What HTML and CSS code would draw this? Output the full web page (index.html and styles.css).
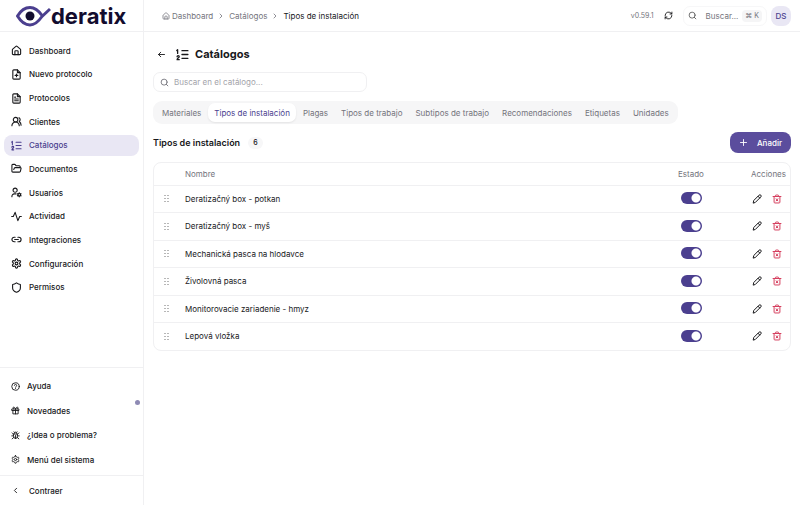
FILE: index.html
```html
<!DOCTYPE html>
<html lang="es">
<head>
<meta charset="utf-8">
<meta name="viewport" content="width=device-width, initial-scale=1">
<title>Deratix – Catálogos</title>
<link rel="stylesheet" href="styles.css">
</head>
<body>
<svg class="sprite" aria-hidden="true">
  <symbol id="home" viewBox="0 0 24 24"><path d="M3 10.500a2 2 0 0 1 .7-1.500l7-6a2 2 0 0 1 2.600 0l7 6a2 2 0 0 1 .7 1.500V19a2 2 0 0 1-2 2H5a2 2 0 0 1-2-2z"/><path d="M8.500 21v-7a1.500 1.500 0 0 1 1.500-1.500h4a1.500 1.500 0 0 1 1.500 1.500v7"/></symbol>
  <symbol id="file-plus" viewBox="0 0 24 24"><path d="M14 2H6a2 2 0 0 0-2 2v16a2 2 0 0 0 2 2h12a2 2 0 0 0 2-2V8z"/><path d="M14 2v6h6M12 11v6M9 14h6"/></symbol>
  <symbol id="file-text" viewBox="0 0 24 24"><path d="M14 2H6a2 2 0 0 0-2 2v16a2 2 0 0 0 2 2h12a2 2 0 0 0 2-2V8z"/><path d="M14 2v6h6M8 9h2M8 13h8M8 17h8"/></symbol>
  <symbol id="users" viewBox="0 0 24 24"><circle cx="10" cy="8" r="5"/><path d="M18 21a8 8 0 0 0-16 0M22 20c0-3.400-2-6.500-4-8a5 5 0 0 0-.500-8.300"/></symbol>
  <symbol id="list" viewBox="0 0 24 24"><path d="M11 5h11M11 12h11M11 19h11M3 10V3L1.500 4.500M2 16a2 2 0 1 1 4 0c0 1.500-4 3-4 5.500h4"/></symbol>
  <symbol id="folder" viewBox="0 0 24 24"><path d="m6 14 1.500-2.900A2 2 0 0 1 9.200 10H20a2 2 0 0 1 1.900 2.500l-1.500 6a2 2 0 0 1-2 1.500H4a2 2 0 0 1-2-2V5a2 2 0 0 1 2-2h3.900a2 2 0 0 1 1.700.9l.8 1.200a2 2 0 0 0 1.700.9H18a2 2 0 0 1 2 2v2"/></symbol>
  <symbol id="user-cog" viewBox="0 0 24 24"><circle cx="9" cy="7" r="4.500"/><path d="M11 15H7a5 5 0 0 0-5 5v1"/><circle cx="18" cy="17" r="3"/><path d="M18 12.500V14M18 20v1.500M22 14.700l-1.400.8M15.400 18.500l-1.400.8M22 19.300l-1.400-.8M15.400 15.500l-1.400-.8"/></symbol>
  <symbol id="activity" viewBox="0 0 24 24"><path d="M1.500 12H5l4-9 6 18 4-9h3.500"/></symbol>
  <symbol id="link" viewBox="0 0 24 24"><path d="M9 17H7A5 5 0 0 1 7 7h2M15 7h2a5 5 0 1 1 0 10h-2M8 12h8"/></symbol>
  <symbol id="gear" viewBox="0 0 24 24"><path d="M12.200 2h-.4a2 2 0 0 0-2 2v.2a2 2 0 0 1-1 1.700l-.4.300a2 2 0 0 1-2 0l-.2-.1a2 2 0 0 0-2.700.7l-.2.400a2 2 0 0 0 .7 2.700l.2.100a2 2 0 0 1 1 1.700v.5a2 2 0 0 1-1 1.800l-.2.100a2 2 0 0 0-.7 2.700l.2.400a2 2 0 0 0 2.700.7l.2-.1a2 2 0 0 1 2 0l.4.300a2 2 0 0 1 1 1.700v.2a2 2 0 0 0 2 2h.4a2 2 0 0 0 2-2v-.2a2 2 0 0 1 1-1.700l.4-.3a2 2 0 0 1 2 0l.2.100a2 2 0 0 0 2.700-.7l.2-.4a2 2 0 0 0-.7-2.700l-.2-.1a2 2 0 0 1-1-1.800v-.5a2 2 0 0 1 1-1.700l.2-.1a2 2 0 0 0 .7-2.700l-.2-.4a2 2 0 0 0-2.700-.7l-.2.100a2 2 0 0 1-2 0l-.4-.3a2 2 0 0 1-1-1.700V4a2 2 0 0 0-2-2z"/><circle cx="12" cy="12" r="3"/></symbol>
  <symbol id="shield" viewBox="0 0 24 24"><path d="M20.500 13c0 5-3.500 7.500-8.200 9.200h-.6C7 20.500 3.500 18 3.500 13V5.500c3.500 0 6-1.500 8.500-3.500 2.500 2 5 3.500 8.500 3.500z"/></symbol>
  <symbol id="help" viewBox="0 0 24 24"><circle cx="12" cy="12" r="10"/><path d="M9 9a3 3 0 0 1 6 .8c0 2-3 2.400-3 4.200M12 17.500v.1"/></symbol>
  <symbol id="gift" viewBox="0 0 24 24"><path d="M3 8h18v4H3zM5 12v9h14v-9M12 8v13M7.500 8a2.500 2.500 0 0 1 0-5C10 3 12 8 12 8s2-5 4.500-5a2.500 2.500 0 0 1 0 5"/></symbol>
  <symbol id="bug" viewBox="0 0 24 24"><path d="M8 7a4 4 0 0 1 8 0M7 8h10v7a5 5 0 0 1-10 0zM12 20v-8M8 2l2 2M16 2l-2 2M3 5l4 4M21 5l-4 4M2 13h5M17 13h5M3 21l4.500-4M21 21l-4.500-4"/></symbol>
  <symbol id="chev-left" viewBox="0 0 24 24"><path d="m15 18-6-6 6-6"/></symbol>
  <symbol id="chev-right" viewBox="0 0 24 24"><path d="m9 18 6-6-6-6"/></symbol>
  <symbol id="arrow-left" viewBox="0 0 24 24"><path d="m10 18-6-6 6-6M20 12H4"/></symbol>
  <symbol id="search" viewBox="0 0 24 24"><circle cx="11" cy="11" r="8"/><path d="m21 21-4.300-4.300"/></symbol>
  <symbol id="refresh" viewBox="0 0 24 24"><path d="M3 12a9 9 0 0 1 15.500-6.300L21 8M21 3v5h-5M21 12a9 9 0 0 1-15.500 6.300L3 16M8 16H3v5"/></symbol>
  <symbol id="plus" viewBox="0 0 24 24"><path d="M4 12h16M12 4v16"/></symbol>
  <symbol id="grip" viewBox="0 0 24 24"><path d="M8 4v.1M8 12v.1M8 20v.1M16 4v.1M16 12v.1M16 20v.1"/></symbol>
  <symbol id="pencil" viewBox="0 0 24 24"><path d="M3 21l1.300-5.500L17 2.800a2.800 2.800 0 0 1 4.200 4.200L8.500 19.700zM14.500 5.500l4 4"/></symbol>
  <symbol id="trash" viewBox="0 0 24 24"><path d="M2.500 6h19M5 6v13.500a2 2 0 0 0 2 2h10a2 2 0 0 0 2-2V6M8 6V4.500a2 2 0 0 1 2-2h4a2 2 0 0 1 2 2V6M10 11.500l4 5M14 11.500l-4 5"/></symbol>
</svg>

<div class="app">
  <aside class="sidebar">
    <a class="brand" href="#" aria-label="deratix">
      <svg class="eye" viewBox="0 0 36 24" aria-hidden="true"><path d="M35 5 27 12.500c-3.500 5-7.500 8.500-12 8.500C9.500 21 5.500 17 2.500 12 5.500 7 9.500 3.500 15 3.500c5 0 9 3.500 12.500 8.500"/><circle cx="15" cy="12" r="4.500"/></svg>
      <span class="wordmark">deratix</span>
    </a>
    <nav class="nav" aria-label="Principal">
      <a href="#"><svg class="icon"><use href="#home"/></svg>Dashboard</a>
      <a href="#"><svg class="icon"><use href="#file-plus"/></svg>Nuevo protocolo</a>
      <a href="#"><svg class="icon"><use href="#file-text"/></svg>Protocolos</a>
      <a href="#"><svg class="icon"><use href="#users"/></svg>Clientes</a>
      <a href="#" class="active" aria-current="page"><svg class="icon"><use href="#list"/></svg>Catálogos</a>
      <a href="#"><svg class="icon"><use href="#folder"/></svg>Documentos</a>
      <a href="#"><svg class="icon"><use href="#user-cog"/></svg>Usuarios</a>
      <a href="#"><svg class="icon"><use href="#activity"/></svg>Actividad</a>
      <a href="#"><svg class="icon"><use href="#link"/></svg>Integraciones</a>
      <a href="#"><svg class="icon"><use href="#gear"/></svg>Configuración</a>
      <a href="#"><svg class="icon"><use href="#shield"/></svg>Permisos</a>
    </nav>
    <div class="support">
      <a href="#"><svg class="icon"><use href="#help"/></svg>Ayuda</a>
      <a href="#" class="has-news"><svg class="icon"><use href="#gift"/></svg>Novedades</a>
      <a href="#"><svg class="icon"><use href="#bug"/></svg>¿Idea o problema?</a>
      <a href="#"><svg class="icon"><use href="#gear"/></svg>Menú del sistema</a>
    </div>
    <button class="collapse" type="button"><svg class="icon"><use href="#chev-left"/></svg>Contraer</button>
  </aside>

  <div class="page">
    <header class="topbar">
      <nav class="crumbs" aria-label="Ruta">
        <a href="#"><svg class="icon"><use href="#home"/></svg>Dashboard</a>
        <svg class="icon sep"><use href="#chev-right"/></svg>
        <a href="#">Catálogos</a>
        <svg class="icon sep"><use href="#chev-right"/></svg>
        <span aria-current="page">Tipos de instalación</span>
      </nav>
      <div class="tools">
        <span class="version">v0.59.1</span>
        <button class="refresh" type="button" aria-label="Actualizar"><svg class="icon"><use href="#refresh"/></svg></button>
        <button class="quick-search" type="button"><svg class="icon"><use href="#search"/></svg><span>Buscar...</span><kbd>⌘ K</kbd></button>
        <button class="avatar" type="button">DS</button>
      </div>
    </header>

    <main class="content">
      <div class="title">
        <button class="back" type="button" aria-label="Volver"><svg class="icon"><use href="#arrow-left"/></svg></button>
        <svg class="icon large"><use href="#list"/></svg>
        <h1>Catálogos</h1>
      </div>
      <label class="filter"><svg class="icon"><use href="#search"/></svg><input type="search" placeholder="Buscar en el catálogo..." aria-label="Buscar en el catálogo"></label>
      <div class="tabs" role="tablist">
        <button type="button" role="tab">Materiales</button>
        <button type="button" role="tab" aria-selected="true">Tipos de instalación</button>
        <button type="button" role="tab">Plagas</button>
        <button type="button" role="tab">Tipos de trabajo</button>
        <button type="button" role="tab">Subtipos de trabajo</button>
        <button type="button" role="tab">Recomendaciones</button>
        <button type="button" role="tab">Etiquetas</button>
        <button type="button" role="tab">Unidades</button>
      </div>
      <div class="section-head">
        <h2>Tipos de instalación</h2>
        <span class="count">6</span>
        <button class="add" type="button"><svg class="icon"><use href="#plus"/></svg>Añadir</button>
      </div>
      <div class="card">
        <table>
          <thead><tr><th class="grip"></th><th>Nombre</th><th class="state">Estado</th><th class="actions">Acciones</th></tr></thead>
          <tbody>
            <tr><td class="grip"><svg class="icon"><use href="#grip"/></svg></td><td>Deratizačný box - potkan</td><td class="state"><input type="checkbox" role="switch" aria-label="Estado" checked></td><td class="actions"><div><button type="button" aria-label="Editar"><svg class="icon"><use href="#pencil"/></svg></button><button class="delete" type="button" aria-label="Eliminar"><svg class="icon"><use href="#trash"/></svg></button></div></td></tr>
            <tr><td class="grip"><svg class="icon"><use href="#grip"/></svg></td><td>Deratizačný box - myš</td><td class="state"><input type="checkbox" role="switch" aria-label="Estado" checked></td><td class="actions"><div><button type="button" aria-label="Editar"><svg class="icon"><use href="#pencil"/></svg></button><button class="delete" type="button" aria-label="Eliminar"><svg class="icon"><use href="#trash"/></svg></button></div></td></tr>
            <tr><td class="grip"><svg class="icon"><use href="#grip"/></svg></td><td>Mechanická pasca na hlodavce</td><td class="state"><input type="checkbox" role="switch" aria-label="Estado" checked></td><td class="actions"><div><button type="button" aria-label="Editar"><svg class="icon"><use href="#pencil"/></svg></button><button class="delete" type="button" aria-label="Eliminar"><svg class="icon"><use href="#trash"/></svg></button></div></td></tr>
            <tr><td class="grip"><svg class="icon"><use href="#grip"/></svg></td><td>Živolovná pasca</td><td class="state"><input type="checkbox" role="switch" aria-label="Estado" checked></td><td class="actions"><div><button type="button" aria-label="Editar"><svg class="icon"><use href="#pencil"/></svg></button><button class="delete" type="button" aria-label="Eliminar"><svg class="icon"><use href="#trash"/></svg></button></div></td></tr>
            <tr><td class="grip"><svg class="icon"><use href="#grip"/></svg></td><td>Monitorovacie zariadenie - hmyz</td><td class="state"><input type="checkbox" role="switch" aria-label="Estado" checked></td><td class="actions"><div><button type="button" aria-label="Editar"><svg class="icon"><use href="#pencil"/></svg></button><button class="delete" type="button" aria-label="Eliminar"><svg class="icon"><use href="#trash"/></svg></button></div></td></tr>
            <tr><td class="grip"><svg class="icon"><use href="#grip"/></svg></td><td>Lepová vložka</td><td class="state"><input type="checkbox" role="switch" aria-label="Estado" checked></td><td class="actions"><div><button type="button" aria-label="Editar"><svg class="icon"><use href="#pencil"/></svg></button><button class="delete" type="button" aria-label="Eliminar"><svg class="icon"><use href="#trash"/></svg></button></div></td></tr>
          </tbody>
        </table>
      </div>
    </main>
  </div>
</div>
</body>
</html>
```
FILE: styles.css
```css
:root {
  --ink: #18181b;
  --muted: #74747c;
  --line: #f0f0f2;
  --brand: #4b3f8f;
  --brand-soft: #e9e7f4;
}

* { box-sizing: border-box; }

body {
  margin: 0;
  color: var(--ink);
  background: #fff;
  font: 400 8px/12px Inter, "Liberation Sans", sans-serif;
}

a { color: inherit; text-decoration: none; }
button { padding: 0; border: 0; background: none; color: inherit; font: inherit; cursor: pointer; }
h1, h2 { margin: 0; }

.sprite { position: absolute; width: 0; height: 0; }

.icon {
  flex: none;
  width: 9px;
  height: 9px;
  fill: none;
  stroke: currentColor;
  stroke-width: 2.4;
  stroke-linecap: round;
  stroke-linejoin: round;
}

.icon.large { width: 13px; height: 13px; }

.app { display: flex; min-height: 100vh; }

.sidebar {
  display: flex;
  flex: none;
  flex-direction: column;
  width: 144px;
  border-right: 1px solid var(--line);
}

.brand {
  display: flex;
  align-items: center;
  height: 32px;
  padding-left: 15px;
  border-bottom: 1px solid var(--line);
}

.eye { width: 36px; height: 24px; fill: none; stroke: var(--brand); stroke-width: 3; stroke-linejoin: round; }
.eye circle { fill: #120c2e; stroke: none; }
.wordmark { color: #120c2e; font-size: 22px; font-weight: 700; line-height: 24px; }

.nav {
  display: grid;
  height: 260px;
  margin-top: 7px;
  padding: 0 4px;
  align-items: center;
  font-weight: 500;
}

.nav a {
  display: flex;
  align-items: center;
  gap: 7px;
  height: 21px;
  padding-left: 7px;
  border-radius: 8px;
}

.nav .icon { width: 11px; height: 11px; }
.nav .active { background: var(--brand-soft); color: var(--brand); }

.support {
  display: grid;
  align-items: center;
  height: 108px;
  margin-top: auto;
  padding: 6px 4px 3px 11px;
  border-top: 1px solid var(--line);
  font-weight: 500;
}

.support a { position: relative; display: flex; align-items: center; gap: 7px; }

.has-news::after {
  content: "";
  position: absolute;
  top: -5px;
  right: -1px;
  width: 5px;
  height: 5px;
  border-radius: 50%;
  background: #8e8ab4;
}

.collapse {
  display: flex;
  align-items: center;
  gap: 9px;
  height: 30px;
  padding-left: 11px;
  border-top: 1px solid var(--line);
  font-weight: 500;
}

.page { flex: 1; min-width: 0; }

.topbar {
  display: flex;
  align-items: center;
  justify-content: space-between;
  height: 32px;
  padding: 0 9px 0 18px;
  border-bottom: 1px solid var(--line);
}

.crumbs, .crumbs a, .tools { display: flex; align-items: center; }
.crumbs { gap: 4px; color: var(--muted); }
.crumbs a { gap: 2px; }
.crumbs .icon { width: 8px; height: 8px; }
.crumbs span { color: var(--ink); }

.version { margin-right: 10px; color: var(--muted); font-size: 7px; }
.refresh { display: flex; margin-right: 10px; }

.quick-search {
  display: flex;
  align-items: center;
  height: 20px;
  margin-right: 4px;
  padding: 0 4px;
  border: 1px solid #f7f7f8;
  border-radius: 7px;
  color: var(--muted);
}

.quick-search .icon { margin-right: 9px; color: #444; stroke-width: 2; }
kbd { margin-left: 4px; padding: 0 3px; border-radius: 4px; background: #f5f5f6; font: inherit; font-size: 7px; }

.avatar {
  width: 20px;
  height: 20px;
  border-radius: 8px;
  background: var(--brand-soft);
  color: var(--brand);
  font-weight: 500;
}

.content { padding: 13px 9px 0; }

.title { display: flex; align-items: center; height: 18px; padding-left: 4px; }
.back { display: flex; margin-right: 10px; }
h1 { margin-left: 6px; font-size: 11px; font-weight: 700; line-height: 16px; }

.filter {
  display: flex;
  align-items: center;
  gap: 5px;
  width: 214px;
  max-width: 100%;
  height: 20px;
  margin-top: 9px;
  padding-left: 6px;
  border: 1px solid var(--line);
  border-radius: 7px;
  color: var(--muted);
}

.filter input { flex: 1; min-width: 0; padding: 0; border: 0; outline: 0; background: none; color: var(--ink); font: inherit; }
.filter input::placeholder { color: #a3a3aa; }

.tabs {
  display: flex;
  gap: 1px;
  width: fit-content;
  height: 23px;
  margin-top: 9px;
  padding: 2px 3px;
  border-radius: 9px;
  background: #f6f6f7;
}

.tabs button { padding: 0 6px; border-radius: 7px; color: var(--muted); }
.tabs [aria-selected="true"] { background: #fff; color: var(--brand); box-shadow: 0 1px 2px rgb(0 0 0 / 8%); }

.section-head { display: flex; align-items: center; gap: 8px; margin-top: 8px; }
h2 { font-size: 9px; font-weight: 600; line-height: 14px; }
.count { padding: 0 5px; border-radius: 6px; background: #f7f7f8; font-size: 7px; font-weight: 500; }

.add {
  display: flex;
  align-items: center;
  gap: 9px;
  height: 21px;
  margin-left: auto;
  padding: 0 9px;
  border-radius: 8px;
  background: #5b4d9d;
  color: #fff;
  font-weight: 500;
}

.card { margin-top: 9px; border: 1px solid var(--line); border-radius: 8px; }
table { width: 100%; border-collapse: collapse; }
th { height: 22px; color: var(--muted); font-weight: 400; }
th, td { padding: 0; text-align: left; }
tbody tr { height: 27px; border-top: 1px solid var(--line); }
tbody tr:nth-child(even) { height: 28px; }
.grip { width: 31px; padding-left: 8px; color: #555; }
.grip .icon { display: block; stroke-width: 3; }
.state { width: 73px; }
.actions { width: 39px; }
.actions div { display: flex; justify-content: flex-end; gap: 10px; padding-right: 8px; }
.actions button { display: flex; }
.actions .icon { width: 10px; height: 10px; }
.actions .delete { color: #d6405f; }

th.state, th.actions { white-space: nowrap; }

.state input {
  display: block;
  appearance: none;
  width: 21px;
  height: 12px;
  margin: 0 0 1px 3px;
  border-radius: 6px;
  background: radial-gradient(circle at 15px 6px, #fff 4px, transparent 5px) var(--brand);
}
```
